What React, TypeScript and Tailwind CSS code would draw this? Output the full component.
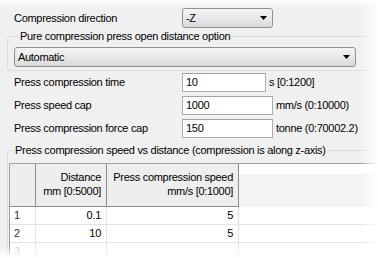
import { useState } from 'react';

function Combo({ value, className }: { value: string; className: string }) {
  return (
    <div
      className={`flex items-center justify-between rounded-[3px] border border-[#8f8f8f] bg-linear-to-b from-[#f4f4f4] via-[#e8e8e8] to-[#d9d9d9] pl-[3px] pr-[5px] ${className}`}
    >
      <span>{value}</span>
      <svg width="7" height="4" viewBox="0 0 7 4">
        <path d="M0 0H7L3.5 4Z" fill="#000" />
      </svg>
    </div>
  );
}

function Field({ label, value, unit, w }: { label: string; value: string; unit: string; w: string }) {
  return (
    <div className="flex h-[19px] items-center">
      <div className="w-[168px] shrink-0">{label}</div>
      <div className={`flex h-full items-center border border-[#abadb3] border-t-[#a0a2a8] bg-white pl-[3px] ${w}`}>{value}</div>
      <div className="pl-[3px]">{unit}</div>
    </div>
  );
}

const rows = [
  { n: '1', d: '0.1', s: '5', c: 'text-[#3a2448]' },
  { n: '2', d: '10', s: '5', c: 'text-[#333]' },
  { n: '3', d: '', s: '', c: 'text-[#c4c4c4]' },
];

export default function App() {
  const [data] = useState(rows);
  return (
    <div className="relative h-[258px] w-[378px] overflow-hidden bg-[#f0f0f0] font-['Liberation_Sans',Arial,sans-serif] text-[11px] leading-[13px] tracking-[-0.3px] text-black">
      <div className="mt-[8px] flex h-[20px] items-center pl-[14px]">
        <div className="w-[168px]">Compression direction</div>
        <Combo value="-Z" className="h-[20px] w-[91px]" />
      </div>

      <fieldset className="ml-[7px] mt-[2px] w-[380px] rounded-[3px] border border-[#d5dfe5] pb-[3px] pl-[6px]">
        <legend className="ml-[5px] px-[1px] leading-[13px]">Pure compression press open distance option</legend>
        <Combo value="Automatic" className="mt-[4px] h-[20px] w-[342px]" />
      </fieldset>

      <div className="mt-[2px] flex flex-col gap-[4px] pl-[14px]">
        <Field label="Press compression time" value="10" unit="s [0:1200]" w="w-[84px]" />
        <Field label="Press speed cap" value="1000" unit="mm/s (0:10000)" w="w-[91px]" />
        <Field label="Press compression force cap" value="150" unit="tonne (0:70002.2)" w="w-[91px]" />
      </div>

      <fieldset className="ml-[7px] mt-[6px] w-[380px] rounded-[3px] border border-[#d5dfe5] pl-[1px]">
        <legend className="ml-[5px] px-[1px] leading-[13px]">Press compression speed vs distance (compression is along z-axis)</legend>
        <div className="mt-[6px] border-l border-t border-[#a0a0a0] bg-white">
          <div className="flex h-[43px]">
            <div className="w-[26px] shrink-0 border-b border-r border-[#8c8c8c] bg-[#eeeeee]" />
            <div className="flex w-[71px] shrink-0 items-center justify-end border-b border-r border-[#8c8c8c] bg-[#eeeeee] pb-[2px] pr-[5px] text-right leading-[14px]">
              <div>
                Distance
                <br />
                mm [0:5000]
              </div>
            </div>
            <div className="flex w-[132px] shrink-0 items-center justify-end border-b border-r border-[#8c8c8c] bg-[#eeeeee] pb-[2px] pr-[5px] text-right leading-[14px]">
              <div>
                Press compression speed
                <br />
                mm/s [0:1000]
              </div>
            </div>
            <div className="flex-1 border-t-[10px] border-white bg-[#f3f3f3]" />
          </div>
          {data.map((r) => (
            <div key={r.n} className="flex h-[18px] border-b border-[#e3e3e3]">
              <div className={`flex w-[26px] shrink-0 items-center border-r border-[#e3e3e3] pl-[4px] ${r.c}`}>{r.n}</div>
              <div className="flex w-[71px] shrink-0 items-center justify-end border-r border-[#e3e3e3] pr-[5px]">{r.d}</div>
              <div className="flex w-[132px] shrink-0 items-center justify-end border-r border-[#e3e3e3] pr-[5px]">{r.s}</div>
              <div className="flex-1" />
            </div>
          ))}
        </div>
      </fieldset>

      <div className="pointer-events-none absolute inset-x-0 top-0 h-[8px] bg-linear-to-b from-white to-transparent" />
      <div className="pointer-events-none absolute inset-y-0 right-0 w-[18px] bg-linear-to-l from-white to-transparent" />
      <div className="pointer-events-none absolute inset-x-0 bottom-0 h-[12px] bg-linear-to-t from-white to-transparent" />
    </div>
  );
}
